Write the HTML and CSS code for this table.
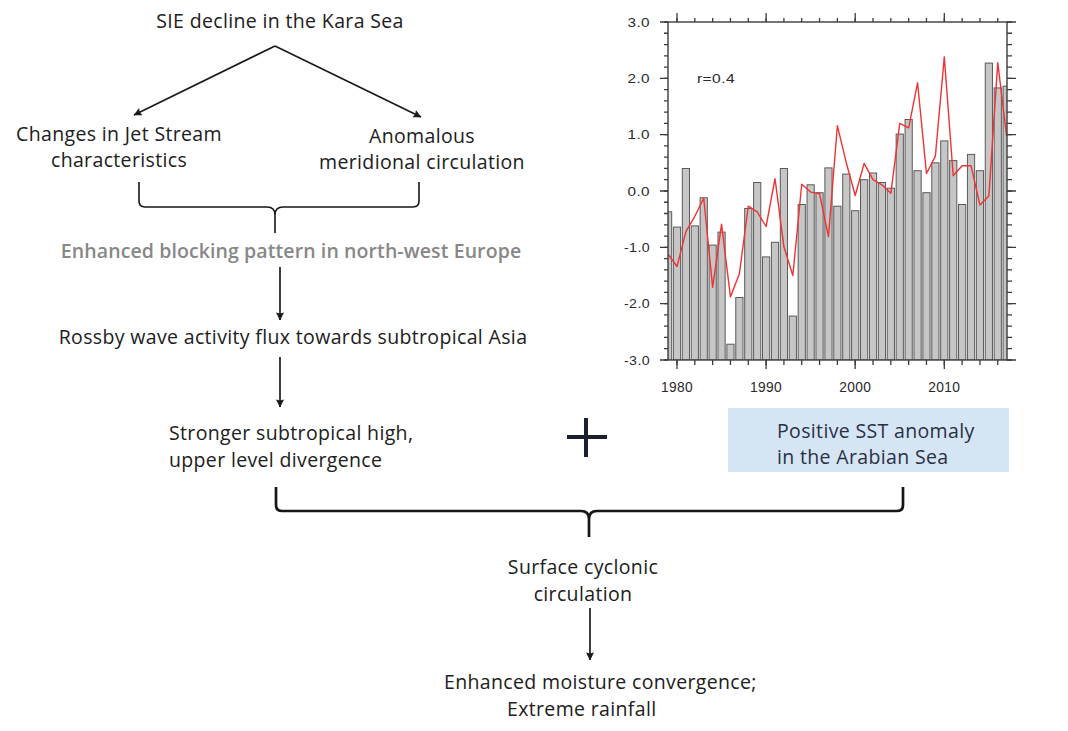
FILE: index.html
```html
<!DOCTYPE html>
<html lang="en">
<head>
<meta charset="utf-8">
<title>Kara Sea SIE decline and extreme rainfall</title>
<link rel="stylesheet" href="styles.css">
</head>
<body>
<div class="figure">
  <svg class="links" width="1068" height="731" viewBox="0 0 1068 731" aria-hidden="true">
    <defs>
      <marker id="head" viewBox="0 0 10 10" refX="9.5" refY="5" markerWidth="9" markerHeight="8" markerUnits="userSpaceOnUse" orient="auto">
        <path d="M0,0 L10,5 L0,10 L1.5,5 z" fill="#1a1a1a"/>
      </marker>
    </defs>
    <g class="arrow">
      <line x1="275" y1="46" x2="134" y2="115" marker-end="url(#head)"/>
      <line x1="275" y1="46" x2="421" y2="117" marker-end="url(#head)"/>
      <line x1="280" y1="267" x2="280" y2="320" marker-end="url(#head)"/>
      <line x1="280" y1="357" x2="280" y2="407" marker-end="url(#head)"/>
      <line x1="590" y1="608" x2="590" y2="660" marker-end="url(#head)"/>
    </g>
    <path class="brace thin" d="M139,182 L139,201 Q139,207 145,207 L267,207 Q275,207 275,215 L275,233 M275,215 Q275,207 283,207 L413,207 Q419,207 419,201 L419,182"/>
    <path class="brace thick" d="M276,487 L276,505 Q276,511 282,511 L581,511 Q589,511 589,519 L589,537 M589,519 Q589,511 597,511 L897,511 Q903,511 903,505 L903,487"/>
    <g class="plus">
      <line x1="567" y1="437" x2="607" y2="437"/>
      <line x1="586" y1="418" x2="586" y2="457"/>
    </g>
  </svg>

  <div class="node n-sie">SIE decline in the Kara Sea</div>
  <div class="node n-jet">Changes in Jet Stream<br>characteristics</div>
  <div class="node n-merid">Anomalous<br>meridional circulation</div>
  <div class="node n-block">Enhanced blocking pattern in north-west Europe</div>
  <div class="node n-rossby">Rossby wave activity flux towards subtropical Asia</div>
  <div class="node n-high">Stronger subtropical high,<br>upper level divergence</div>
  <div class="node n-sst"><span>Positive SST anomaly</span><span>in the Arabian Sea</span></div>
  <div class="node n-cyc">Surface cyclonic<br>circulation</div>
  <div class="node n-rain"><span>Enhanced moisture convergence;</span><span class="indent">Extreme rainfall</span></div>

  <svg class="chart" width="440" height="400" viewBox="600 0 440 400" aria-label="Time series 1979-2017, r=0.4">
    <defs>
      <clipPath id="plot"><rect x="668" y="22" width="339" height="338"/></clipPath>
    </defs>
    <g class="bars" clip-path="url(#plot)">
      <rect x="664.49" y="211.8" width="7.2" height="148.2"/>
      <rect x="673.4" y="227.1" width="7.2" height="132.9"/>
      <rect x="682.31" y="168.5" width="7.2" height="191.5"/>
      <rect x="691.22" y="225.9" width="7.2" height="134.1"/>
      <rect x="700.13" y="197.8" width="7.2" height="162.2"/>
      <rect x="709.04" y="245.1" width="7.2" height="114.9"/>
      <rect x="717.95" y="232.1" width="7.2" height="127.9"/>
      <rect x="726.86" y="344.2" width="7.2" height="15.8"/>
      <rect x="735.77" y="297.5" width="7.2" height="62.5"/>
      <rect x="744.68" y="208.5" width="7.2" height="151.5"/>
      <rect x="753.59" y="182.5" width="7.2" height="177.5"/>
      <rect x="762.5" y="256.9" width="7.2" height="103.1"/>
      <rect x="771.41" y="242.3" width="7.2" height="117.7"/>
      <rect x="780.32" y="168.5" width="7.2" height="191.5"/>
      <rect x="789.23" y="316.1" width="7.2" height="43.9"/>
      <rect x="798.14" y="204.5" width="7.2" height="155.5"/>
      <rect x="807.05" y="184.8" width="7.2" height="175.2"/>
      <rect x="815.96" y="192.7" width="7.2" height="167.3"/>
      <rect x="824.87" y="167.9" width="7.2" height="192.1"/>
      <rect x="833.78" y="206.2" width="7.2" height="153.8"/>
      <rect x="842.69" y="174.1" width="7.2" height="185.9"/>
      <rect x="851.6" y="210.7" width="7.2" height="149.3"/>
      <rect x="860.51" y="179.7" width="7.2" height="180.3"/>
      <rect x="869.42" y="173.0" width="7.2" height="187"/>
      <rect x="878.33" y="182.5" width="7.2" height="177.5"/>
      <rect x="887.24" y="188.2" width="7.2" height="171.8"/>
      <rect x="896.15" y="134.1" width="7.2" height="225.9"/>
      <rect x="905.06" y="119.5" width="7.2" height="240.5"/>
      <rect x="913.97" y="170.7" width="7.2" height="189.3"/>
      <rect x="922.88" y="192.7" width="7.2" height="167.3"/>
      <rect x="931.79" y="162.8" width="7.2" height="197.2"/>
      <rect x="940.7" y="140.9" width="7.2" height="219.1"/>
      <rect x="949.61" y="160.6" width="7.2" height="199.4"/>
      <rect x="958.52" y="204.5" width="7.2" height="155.5"/>
      <rect x="967.43" y="154.4" width="7.2" height="205.6"/>
      <rect x="976.34" y="170.7" width="7.2" height="189.3"/>
      <rect x="985.25" y="63.1" width="7.2" height="296.9"/>
      <rect x="994.16" y="87.9" width="7.2" height="272.1"/>
      <rect x="1003.07" y="86.2" width="7.2" height="273.8"/>
    </g>
    <polyline class="series" clip-path="url(#plot)" points="668.09,254.1 677,266.5 685.91,231.6 694.82,216.3 703.73,198.3 712.64,287.3 721.55,224.2 730.46,296.9 739.37,273.8 748.28,206.2 757.19,211.8 766.1,226.5 775.01,178.6 783.92,246.8 792.83,275.5 801.74,184.2 810.65,192.1 819.56,193.8 828.47,236.6 837.38,125.7 846.29,162.8 855.2,195.5 864.11,163.4 873.02,179.7 881.93,184.8 890.84,193.3 899.75,123.4 908.66,127.9 917.57,82.8 926.48,173.5 935.39,156.1 944.3,56.9 953.21,175.8 962.12,165.7 971.03,165.7 979.94,205.1 988.85,196.1 997.76,62.6 1006.67,136.4"/>
    <g class="ticks">
      <line x1="666" y1="21.35" x2="666" y2="361" stroke-width="4" stroke-dasharray="1.3 9.966"/>
      <line x1="664" y1="21.35" x2="664" y2="361" stroke-width="8" stroke-dasharray="1.3 55.03"/>
      <line x1="1009.5" y1="21.35" x2="1009.5" y2="361" stroke-width="5" stroke-dasharray="1.3 9.966"/>
      <line x1="1011.5" y1="21.35" x2="1011.5" y2="361" stroke-width="9" stroke-dasharray="1.3 55.03"/>
      <line x1="676.35" y1="20" x2="1007" y2="20" stroke-width="4" stroke-dasharray="1.3 16.52"/>
      <line x1="676.35" y1="17.5" x2="1007" y2="17.5" stroke-width="9" stroke-dasharray="1.3 87.8"/>
      <line x1="676.35" y1="362.5" x2="1007" y2="362.5" stroke-width="5" stroke-dasharray="1.3 16.52"/>
      <line x1="676.35" y1="364.5" x2="1007" y2="364.5" stroke-width="9" stroke-dasharray="1.3 87.8"/>
    </g>
    <rect class="frame" x="668" y="22" width="339" height="338"/>
    <g class="ylab">
      <text x="650" y="26.5" textLength="22.5" lengthAdjust="spacingAndGlyphs">3.0</text>
      <text x="650" y="82.8" textLength="22.5" lengthAdjust="spacingAndGlyphs">2.0</text>
      <text x="650" y="139.2" textLength="22.5" lengthAdjust="spacingAndGlyphs">1.0</text>
      <text x="650" y="195.5" textLength="22.5" lengthAdjust="spacingAndGlyphs">0.0</text>
      <text x="650" y="251.8" textLength="26" lengthAdjust="spacingAndGlyphs">-1.0</text>
      <text x="650" y="308.2" textLength="26" lengthAdjust="spacingAndGlyphs">-2.0</text>
      <text x="650" y="364.5" textLength="26" lengthAdjust="spacingAndGlyphs">-3.0</text>
    </g>
    <g class="xlab">
      <text x="677" y="391.5" textLength="32" lengthAdjust="spacingAndGlyphs">1980</text>
      <text x="766.1" y="391.5" textLength="32" lengthAdjust="spacingAndGlyphs">1990</text>
      <text x="855.2" y="391.5" textLength="32" lengthAdjust="spacingAndGlyphs">2000</text>
      <text x="944.3" y="391.5" textLength="32" lengthAdjust="spacingAndGlyphs">2010</text>
    </g>
    <text class="rval" x="697" y="82.7" textLength="38" lengthAdjust="spacingAndGlyphs">r=0.4</text>
  </svg>
</div>
</body>
</html>
```

FILE: styles.css
```css
html, body {
  margin: 0;
  padding: 0;
  background: #ffffff;
}

.figure {
  position: relative;
  width: 1068px;
  height: 731px;
  overflow: hidden;
  font-family: "Open Sans", "Noto Sans", sans-serif;
  font-size: 19.5px;
  font-weight: 500;
  line-height: 26px;
  letter-spacing: 0.35px;
  color: #202020;
}

.links {
  position: absolute;
  left: 0;
  top: 0;
}

.links .arrow line {
  stroke: #1a1a1a;
  stroke-width: 1.7;
}

.brace {
  fill: none;
  stroke: #161616;
  stroke-linejoin: round;
}

.brace.thin { stroke-width: 1.6; }
.brace.thick { stroke-width: 2.7; }

.plus line {
  stroke: #1b2031;
  stroke-width: 4;
}

.node {
  position: absolute;
  white-space: nowrap;
}

.n-sie   { left: 130px; top: 8px;   width: 300px; text-align: center; }
.n-jet   { left: 0;     top: 121px; width: 238px; text-align: center; }
.n-merid { left: 272px; top: 123px; width: 300px; text-align: center; }
.n-block { left: 41px;  top: 238px; width: 500px; text-align: center; color: #878787; font-weight: 600; letter-spacing: 0.1px; }
.n-rossby{ left: 18px;  top: 324px; width: 550px; text-align: center; }
.n-high  { left: 169px; top: 420px; line-height: 26.6px; }

.n-sst {
  left: 728px;
  top: 408px;
  width: 281px;
  height: 64px;
  box-sizing: border-box;
  padding: 10px 0 0 49px;
  background: #d6e5f4;
  color: #283044;
  display: flex;
  flex-direction: column;
}

.n-cyc   { left: 433px; top: 553px; width: 300px; text-align: center; line-height: 27.4px; }

.n-rain {
  left: 444px;
  top: 669px;
  display: flex;
  flex-direction: column;
  line-height: 26.7px;
}

.n-rain .indent { margin-left: 63px; }

.chart {
  position: absolute;
  left: 600px;
  top: 0;
}

.bars rect {
  fill: #c6c6c6;
  stroke: #5a5a5a;
  stroke-width: 1;
}

.series {
  fill: none;
  stroke: #ee3333;
  stroke-width: 1.4;
  stroke-linejoin: round;
}

.ticks line {
  stroke: #3c3c3c;
}

.frame {
  fill: none;
  stroke: #3c3c3c;
  stroke-width: 1.4;
}

.ylab text, .xlab text, .rval {
  font-family: "Liberation Sans", Arial, sans-serif;
  fill: #2a2a2a;
}

.ylab text { font-size: 13px; text-anchor: end; }
.xlab text { font-size: 14px; text-anchor: middle; }
.rval { font-size: 13.5px; }
```
